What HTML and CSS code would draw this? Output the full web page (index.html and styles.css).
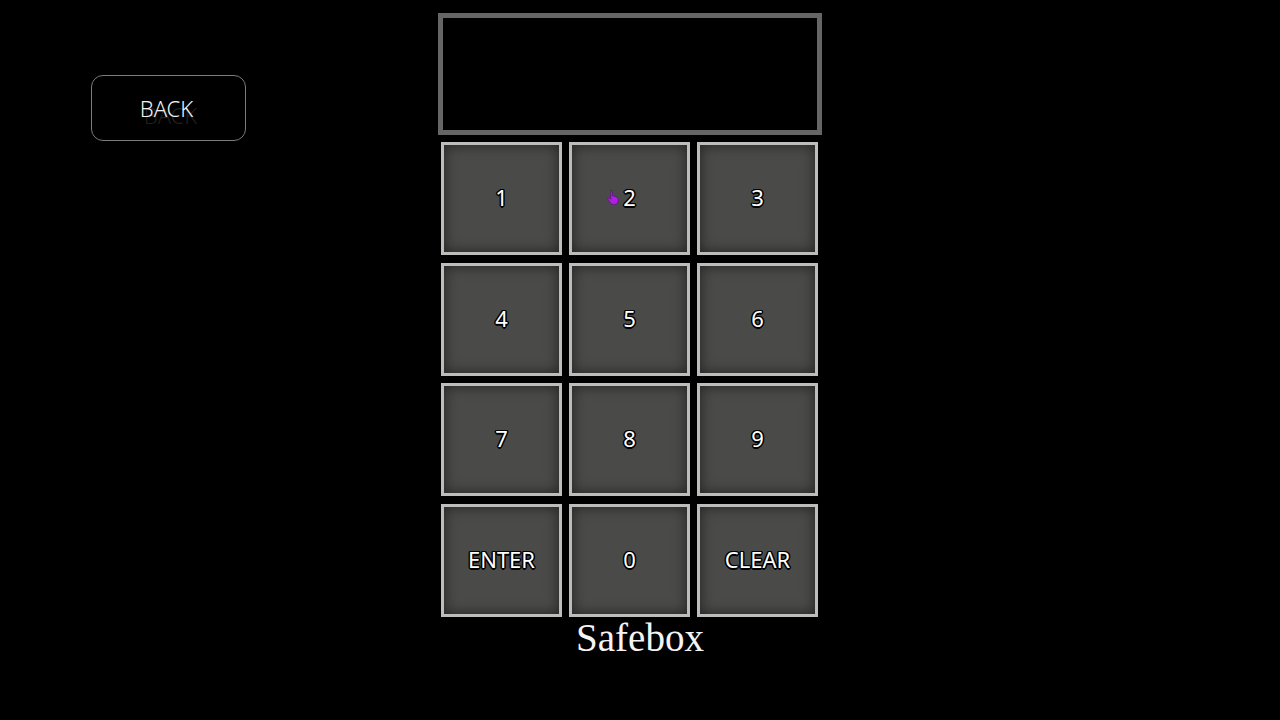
FILE: index.html
```html
<!DOCTYPE html>
<html lang="en">
<head>
<meta charset="utf-8">
<title>Safebox</title>
<link rel="stylesheet" href="styles.css">
</head>
<body>
<div class="page">
  <div class="side">
    <button class="back">BACK</button>
  </div>
  <div class="safe">
    <div class="display"></div>
    <div class="keypad">
      <div class="key">1</div>
      <div class="key key-cursor">2
        <svg class="cursor" viewBox="0 0 12 16" width="12" height="16" aria-hidden="true">
          <path d="M4 1.2c.8 0 1.3.6 1.3 1.3v4.3l.6-.1c.7 0 1.1.4 1.2.9.3-.3.7-.4 1.1-.3.5.1.8.5.9.9.3-.2.6-.3 1-.2.6.1 1 .7 1 1.3v2.6c0 1.9-1.5 3.6-3.5 3.6H6.3c-1.1 0-2-.5-2.7-1.4L1.1 10.6c-.4-.6-.3-1.3.2-1.6.5-.4 1.2-.3 1.6.2l.8 1V2.5c0-.7.5-1.3 1.3-1.3z" fill="#b01ee0" stroke="#5a0a80" stroke-width=".6"/>
        </svg>
      </div>
      <div class="key">3</div>
      <div class="key">4</div>
      <div class="key">5</div>
      <div class="key">6</div>
      <div class="key">7</div>
      <div class="key">8</div>
      <div class="key">9</div>
      <div class="key">ENTER</div>
      <div class="key">0</div>
      <div class="key">CLEAR</div>
    </div>
    <div class="title">Safebox</div>
  </div>
</div>
</body>
</html>
```

FILE: styles.css
```css
html, body {
  margin: 0;
  padding: 0;
  background: #000;
}

body {
  width: 1280px;
  height: 720px;
  overflow: hidden;
  font-family: "Noto Sans", "Open Sans", "Liberation Sans", sans-serif;
  color: #fff;
}

.page {
  display: flex;
  align-items: flex-start;
  padding-top: 13px;
}

.side {
  padding: 62px 0 0 91px;
}

.back {
  display: flex;
  align-items: center;
  justify-content: center;
  width: 155px;
  height: 66px;
  box-sizing: border-box;
  background: #000;
  border: 1.5px solid #7c7c7c;
  border-radius: 12px;
  color: #f2f2f2;
  font-family: "Noto Sans", "Open Sans", sans-serif;
  font-weight: 300;
  font-size: 22px;
  padding: 0 4px 0 0;
  text-shadow: 4px 7px 0 rgba(150, 150, 150, 0.22);
}

.safe {
  margin-left: 192px;
  width: 384px;
  display: flex;
  flex-direction: column;
}

.display {
  width: 384px;
  height: 122px;
  box-sizing: border-box;
  border: 5px solid #666;
  background: #000;
}

.keypad {
  margin-top: 7px;
  padding: 0 3px;
  display: grid;
  grid-template-columns: repeat(3, 121px);
  grid-auto-rows: 113px;
  column-gap: 7px;
  row-gap: 7.7px;
}

.key {
  position: relative;
  display: flex;
  align-items: center;
  justify-content: center;
  box-sizing: border-box;
  border: 3px solid #bdbdbb;
  background: #4a4b49;
  box-shadow: inset 0 0 14px rgba(0, 0, 0, 0.55);
  font-size: 22px;
  padding-bottom: 3px;
  color: #fff;
  text-shadow:
    1px 1px 0 #000, -1px -1px 0 #000, 1px -1px 0 #000, -1px 1px 0 #000,
    0 1.5px 0 #000, 0 -1.5px 0 #000, 1.5px 0 0 #000, -1.5px 0 0 #000;
}

.cursor {
  position: absolute;
  left: 35px;
  top: 44px;
}

.title {
  margin-top: 1px;
  padding-left: 20px;
  text-align: center;
  font-family: "Liberation Serif", "Times New Roman", serif;
  font-size: 39px;
  line-height: 39px;
  color: #f4f4f4;
}
```
